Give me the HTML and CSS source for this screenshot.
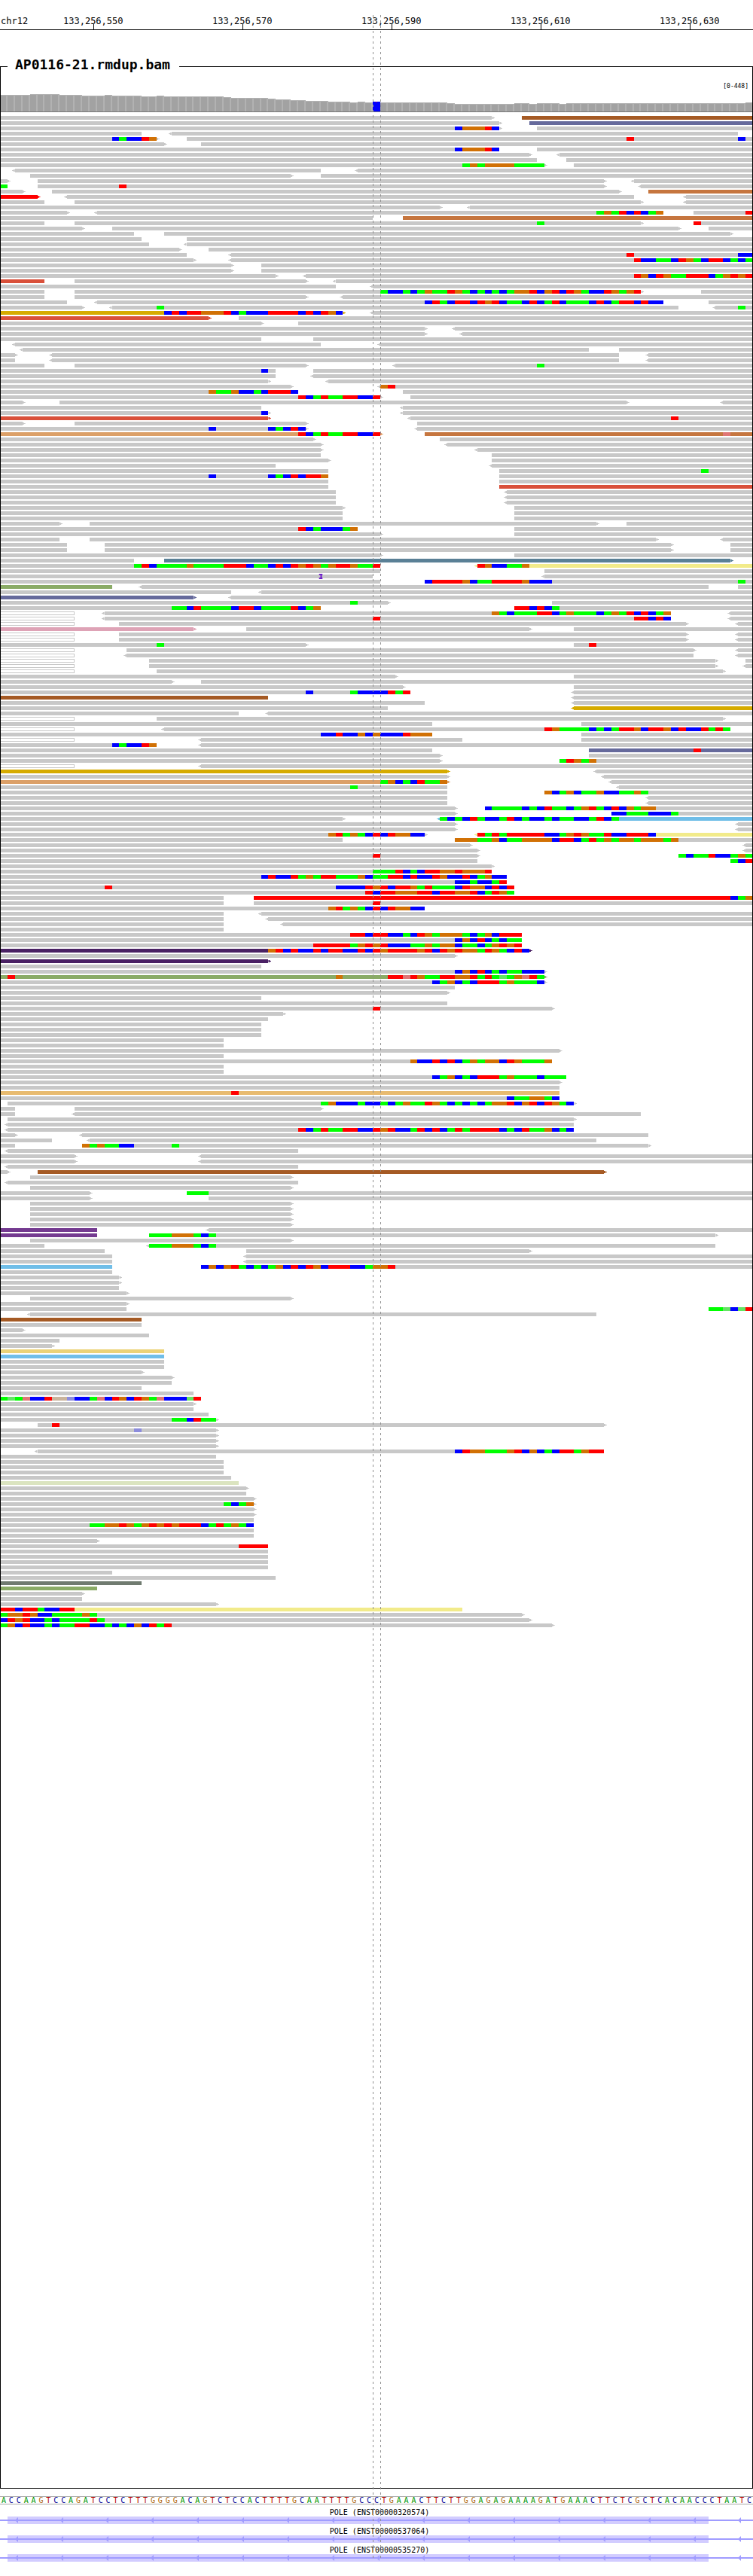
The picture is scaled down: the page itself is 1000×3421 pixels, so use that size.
FILE: index.html
```html
<!DOCTYPE html>
<html lang="en">
<head>
<meta charset="utf-8">
<title>chr12 – AP0116-21.rmdup.bam</title>
<link rel="stylesheet" href="styles.css">
</head>
<body>
<main class="browser">
  <header class="axis bases">
    <span class="chrom">chr12</span>
  </header>

  <fieldset class="track">
    <legend>AP0116-21.rmdup.bam</legend>
    <p class="range">[0-448]</p>
    <div class="plot">
      <div class="coverage bases"></div>
      <div class="pileup"></div>
    </div>
  </fieldset>

  <div class="sequence bases"></div>

  <section class="genes"></section>

  <div class="guide guide-start"></div>
  <div class="guide guide-end"></div>
</main>
<script src="data.js"></script>
<script src="browser.js"></script>
</body>
</html>
```
FILE: styles.css
```css
* { box-sizing: border-box; }

body {
  margin: 0;
  background: #fff;
  color: #000;
  font-family: "DejaVu Sans Mono", monospace;
}

.browser {
  position: relative;
  padding-bottom: 19px;
  overflow: hidden;
}

/* One column per reference base */
.bases {
  display: grid;
  grid-template-columns: repeat(101, minmax(0, 1fr));
}

/* Axis */
.axis {
  padding-top: 21px;
  border-bottom: 1px solid #000;
  font-size: 12px;
  line-height: 14px;
  white-space: nowrap;
}
.chrom { grid-area: 1 / 1 / 2 / 6; padding-left: 1px; }
.tick {
  position: relative;
  display: flex;
  justify-content: center;
  grid-row: 1;
  padding-bottom: 4px;
}
.tick::after {
  content: "";
  position: absolute;
  bottom: 0;
  left: 50%;
  width: 1px;
  height: 7px;
  background: #000;
}

/* Alignment track */
.track {
  min-width: 0;
  margin: 38px 0 0;
  padding: 0 0 1143px;
  border: 1px solid #000;
}
.track legend {
  margin-left: 9px;
  padding: 0 12px 4px 10px;
  font-size: 18px;
  font-weight: bold;
  line-height: 16px;
}
.range {
  margin: 0;
  padding: 12px 5px 0 0;
  font-size: 8px;
  line-height: 10px;
  text-align: right;
}
.plot { margin: 0 -1px; clip-path: inset(0 1px); }

.coverage {
  align-items: end;
  height: 29px;
  border-bottom: 1px solid #787878;
}
.bar {
  background: #a2a2a2;
  border-top: 1px solid #b2b2b2;
  border-right: 2px solid #b2b2b2;
}
.bar-variant { background: linear-gradient(#f00, #f00) center top / 1px 1px no-repeat #00f; }

.pileup {
  display: flex;
  flex-direction: column;
  gap: 2px;
  padding-top: 5px;
}
.row { height: 5px; }
.row > * { grid-row: 1; height: 5px; }

.read { position: relative; background: #c8c8c8; }
.forward::after,
.reverse::after {
  content: "";
  position: absolute;
  top: 0;
  width: 4px;
  height: 5px;
  background: inherit;
}
.forward::after {
  left: 100%;
  clip-path: polygon(0 1px, 2px 1px, 2px 2px, 4px 2px, 4px 3px, 2px 3px, 2px 4px, 0 4px);
}
.reverse::after {
  right: 100%;
  clip-path: polygon(4px 1px, 2px 1px, 2px 2px, 0 2px, 0 3px, 2px 3px, 2px 4px, 4px 4px);
}

.brown { background: #a55a24; }
.slate { background: #666a9c; }
.copper { background: #c6763f; }
.tomato { background: #d9503a; }
.red { background: #f00; }
.gold { background: #d6ab00; }
.sand { background: #dca068; }
.steel { background: #5a8096; }
.yellow { background: #f2eb8a; }
.olive { background: #8aab66; }
.pink { background: #dea3b6; }
.sky { background: #70bee8; }
.plum { background: #4a2164; }
.purple { background: #743a90; }
.tan { background: #e8bb70; }
.straw { background: #ebd277; }
.pale { background: #dbe4c0; }
.moss { background: #707b70; }
.ambiguous { background: #fff; border: 1px solid #c8c8c8; }

.mismatch { position: relative; }
.base-A { background: #0f0; }
.base-C { background: #00f; }
.base-G { background: #d17105; }
.base-T { background: #f00; }
.base-a { background: #64e464; }
.base-c { background: #8c8cdc; }
.base-g { background: #cab49c; }
.base-t { background: #e07676; }

.insertion {
  position: relative;
  justify-self: start;
  width: 5px;
  margin: -1px 0;
  transform: translateX(-50%);
  fill: #6e1ec8;
}
.row > .insertion { height: 7px; }

/* Reference sequence */
.sequence {
  margin-top: 10px;
  border: solid #aaa;
  border-width: 1px 0;
  font-size: 10px;
  line-height: 9px;
  text-align: center;
}
.nt-A { color: #009600; }
.nt-C { color: #000096; }
.nt-G { color: #b0680f; }
.nt-T { color: #b40000; }

/* Genes */
.genes {
  display: grid;
  gap: 5px;
  padding-top: 6px;
}
.gene-name {
  margin: 0;
  padding-left: 8px;
  font-size: 10px;
  line-height: 10px;
  text-align: center;
}
.exon {
  grid-area: 1 / 2 / 2 / 96;
  height: 10px;
  background: #d2ccff;
}
.strand {
  position: relative;
  grid-area: 1 / 1 / 2 / 102;
  display: block;
  width: 100%;
  height: 10px;
}

/* Centre-base guides */
.guide {
  position: absolute;
  top: 20px;
  bottom: 24px;
  width: 1px;
  background: repeating-linear-gradient(#919191 0 3px, transparent 3px 7px);
}
.guide-start { left: calc(100% * 50 / 101); }
.guide-end { left: calc(100% * 51 / 101); }
```
FILE: data.js
```js
const SEQUENCE =
  'ACCAAGTCCAGATCCTCTTTGGGGACAGTCTCCACTTTTGCAATTTTGCC' +
  'CTGAAACTTCTTGGAGAGAAAAGATGAAACTTCTCGCTCACAACCCTAATC';

const TICKS = [
  [12, '133,256,550'], [32, '133,256,570'], [52, '133,256,590'],
  [72, '133,256,610'], [92, '133,256,630'],
];

const GENES = ['POLE (ENST00000320574)', 'POLE (ENST00000537064)', 'POLE (ENST00000535270)'];

// [number of bases, bar height]
const COVERAGE = [
  [4, 22], [4, 23], [3, 22], [3, 21], [1, 22], [4, 21], [2, 20], [1, 21], [8, 20],
  [1, 19], [5, 18], [1, 17], [2, 16], [2, 15], [3, 14], [3, 13], [1, 12], [1, 13],
  [1, 12], [1, 13], [9, 12], [1, 11], [8, 10], [2, 11], [1, 10], [3, 11], [1, 10],
  [24, 11], [1, 12],
];

// One line per row: colour:<start-end>@offsetBASES; < and > mark the strand arrow
const READS = `
0-66> brown:70-101
0-67> slate:71-101
0-67>@61CGGGTC 72-101
0-19 <23-99
0-21>@15CACCTG 25-101@84T@99C
0-22> 27-101
0-67@61CGGGTC 72-101
0-71> <75-101
0-72 76-101
0-73>@62AGAGGGGAAAA 77-101
<2-43 <48-101
4-39> 43-101
0-1> 5-81> <85-101
0-1@0A 5-81>@16T <86-101
0-3> 7-83> copper:87-101
red:0-5> <9-85 <92-101
0-6 10-86> <92-101
0-59> <63-101
0-9> <13-89@80AGATCTCAG 93-101@100T
0-50 copper:54-101
0-6 10-86>@72A 93-101@93T
0-11> 15-91> 95-101
0-18 22-98>
0-19 25-101
0-20 <25-101
0-24> 28-101
0-25 <31-101@84T@99CC
0-26> <31-101@85TCCAACTGACTTCACA
0-31> 35-101
0-31> 35-101
0-37> <41-101@85TGCTGAATTTCAGTGT
tomato:0-6 10-41> <45-101
0-45 <50-101
0-6 10-86>@51ACCACAGAATGACACACAGGTCGTCTGACCTGAGT 94-101
0-6 10-41> <46-101
0-9 <13-89@57CTACTTCTGTCAACTCATCAAACTCATTCTCC 95-101
0-11> <15-91@21A <96-101@99A
gold:0-46>@22CTCTTGGGTCACCCTTTTCTCTGC <50-101
tomato:0-28> 32-101
0-35> 40-101
0-57> <61-101
0-57> <62-101
0-35 42-101
<2-43 <51-101
<3-79 83-101
0-2> <7-83 <87-101
0-2 <7-83 <87-101
0-6 10-41> <53-101@72A
0-37@35C 42-101
0-37 <42-101
0-36> <44-101
0-39> <51-101@51GT
0-40@28GAAGCCACTTTC 54-101
0-51>@40TCATAATTCCT 55-101
0-3> 8-84> <97-101
0-35 <54-101
0-36>@35C <54-101
tomato:0-36> <55-101@90T
0-3> 10-41> 56-101
0-41>@28C@36CACTC <56-101
sand:0-51>@40TCATAATTCCT copper:57-101@97t
0-42> 59-101
0-43> <60-101
0-43> <64-101
0-43 66-101
0-44> 66-101
0-37 <66-101
0-44 67-101@94A
0-44@28C@36CACTCTTG 67-101
0-44 67-101
0-44 tomato:67-101
0-45 <68-101
0-45 <68-101
0-45 <68-101
0-46> 69-101
0-46 69-101
0-46 69-101
0-8> 12-80> 84-101
0-48@40TCACCCAG 69-101
0-51> 69-101
0-8 12-88> <97-101
0-9 14-90> 98-101
0-9 14-90> 98-101
0-51> 69-101
0-18 steel:22-98>
0-51@18ATCAAAAGAAAATTTCAACTCTGTGAGTTGAAT yellow:<64-101@64TGCCAAG
0-51 73-101
0-50@43+ <73-101
0-51 57-101@57CTTTTGCAATTTTGCCC@99A
olive:0-15 <19-95 99-101
0-31 <35-101
slate:0-26> <31-101
0-52>@47A 74-101
0-43@23AACTAAAACTTCAAAATCAG 69-101@69TTCTCA
ambiguous:0-10 <14-90@66GACAAATTCAGAAACAGATCTCAG <98-101
ambiguous:0-10 <14-90@50T@85TTCTC <98-101
ambiguous:0-10 16-92> <99-101
pink:0-26> 33-71> 77-101
ambiguous:0-10 16-92> <99-101
ambiguous:0-10 16-92> <99-101
0-41>@21A 77-101@79T
ambiguous:0-10 17-93> <99-101
ambiguous:0-10 <17-93 <99-101
ambiguous:0-10 20-96> 100-101
ambiguous:0-10 20-96> <100-101
ambiguous:0-10 21-97>
0-53> 77-101
0-23> 27-101
0-54> 77-101
0-55@41C@47ACCCCTAT <77-101
brown:0-36 <77-101
0-57 <77-101
0-52 gold:<77-101
0-32 <36-101
ambiguous:0-10 21-97>
0-58 78-101
ambiguous:0-10 <22-98@73TGAAAACACATTGCTTGCTCCTATA
0-58@43CCTCCGCGCCCTGGG 78-101
ambiguous:0-10 <27-62 78-101
0-21@15CACCTG <27-101
0-58 slate:79-101@93T
0-59> 79-101
0-59> 75-101@75ATGAG
ambiguous:0-10 <27-101
gold:0-60> <80-101
0-60> <81-101
sand:0-60>@51AGCACTAAG <82-101
0-60@47A <83-101
0-60 73-101@73GCAGCAAGCCAAGA
0-60 <87-101
0-60 <87-101
0-61> 65-101@65CAAAACACTAACAGTACTCGAGG
0-61> 82-101@82CCAAACCCA
0-46> sky:<59-101@59ACACTACCATCACCACAACCATCA
0-61> <99-101
0-61> <99-101
0-57>@44GTAGACTCTGGCC yellow:<64-101@64TATATTTTTCCAGTGAATCCTTTC
0-46 61-101@61GGGAAGCAAGGGGCTTCATAGAGGAGGGAG
0-63> <100-101
0-64> <100-101
0-64>@50T 91-101@91ACAATCCAGA
0-64 98-101@98ACT
0-66>
0-66@50AAATCACTTGGTGGGT
0-68@35CTCCTAGATTAAAGCAATTCTCCTGCCTCAGCC
0-68@61CCACCAT
0-69@14T@45CCCCTGTCTTGATAAACTGGCTCT
0-69@49TCTTGGGTTCTTGGTCATGA
0-30 red:34-101@98CAG
0-30 34-101@50T
0-57@44GTAGACTCTGGCC
0-30 <35-101
0-30 <36-101
0-30 <38-101
0-30
0-70@47TTCTTCCACTGAGGGACAGCTTT
0-70@61CGCTCACAA
0-70@42TTTTTAGTGTCCCAAGAGGCAACAGTGT
plum:0-71>@36GTCTCCTCTTCCTCTGTTTTGTCTGTGGATGACTC
0-61>
plum:0-36>
0-35
0-73>@61CGCTCACAACCC
olive:0-73>@1T@45G@52TTtTGAATTGGTATAaAGtTA
0-73>@58CAGCACTTTAGAAAC
0-61
0-60>
0-35
0-60
0-74>@50T
0-38>
0-36
0-35
0-35
0-35
0-30
0-30
0-75>
0-30
0-74@55GCCTCTCAGAGGCTGAAAG
0-30
0-30
0-76@58CAGCACTTTAGAAACAAA
0-75>
0-75
tan:0-75@31T
0-75@68CAAGGAC
1-77>@43AGCCCACCACAGAATGACACACAGGTCGTCTGAC
0-2 10-43>
0-2 <10-86
1-77>
<1-77
<1-77@40TCATAATTCCTGTCCATCTCATATTTTCACTAAGCAC
0-2> <11-87
0-7 <12-80
0-2 11-87>@11GAGAACC@23A
<1-40
0-10> <27-101
0-10> <27-101
<1-40
0-1> brown:5-81>
4-39>
<1-40
4-39>
0-12> 25-101@25AAA
0-12> 28-101
4-39>
4-39>
4-39>
4-39>
4-39>
purple:0-13 <28-101
purple:0-13 20-96>@20AAAGGGACA
4-39>
0-6 <20-96@20AAAGGGACA
0-14 33-71>
0-15 <33-101
0-15 <33-101
sky:0-15 27-101@27CGCGTACACAGCTCTGCTTTCCAGGT
0-15
0-16>
0-16>
0-16
0-17>
4-39>
0-17>
0-17 95-101@95AAaCaT
<4-80
brown:0-19
0-19
0-3>
0-20
0-8
0-7>
straw:0-22
sky:0-22
0-22
0-22
0-19>
0-23>
0-23
0-19
0-26
0-27@0AaAtCCTggcCCAtCTGCTGAtCCCaT
0-26>
0-26
0-28
0-29>@23AACTAA
5-81>@7T
0-29>@18c
0-29>
0-29>
0-29>
<5-81@61CTGGAAAGTCGCACTTAGTT
0-29
0-30
0-30
0-30
0-31
pale:0-32
0-33>
0-33
0-34>
0-34>@30ACAG
0-34>
0-34>
0-34
0-34@12AAGGTGAGTGTGTTTCATAGAC
0-34
0-34
0-13>
0-36@32TTTT
0-36
0-36
0-36
0-36
0-15
0-37
moss:0-19
olive:0-13
0-11>
0-11
0-29>
yellow:0-62@0TTCTTACCTT
0-70>@0AGGTGCCAAAAGA
0-71>@0CTGTCCACAAAATA
0-74>@0AGCTCCACAATTCCACACGCTAT`;
```
FILE: browser.js
```js
const find = selector => document.querySelector(selector);

function add(parent, tag, className, text) {
  const node = document.createElement(tag);
  node.className = className;
  if (text) node.textContent = text;
  parent.append(node);
  return node;
}

// Place a node over the half-open range of bases [start, end)
function span(node, start, end) {
  node.style.gridColumn = `${start + 1} / ${end + 1}`;
}

for (const [base, label] of TICKS) {
  span(add(find('.axis'), 'span', 'tick', label), base - 4, base + 5);
}

for (const [count, height] of COVERAGE) {
  for (let i = 0; i < count; i++) {
    add(find('.coverage'), 'span', 'bar').style.height = `${height}px`;
  }
}
const variant = find('.coverage').children[50];
variant.className = 'bar-variant';
variant.style.height = '13px';

const INSERTION =
  '<svg class="insertion" viewBox="0 0 5 7"><path d="M0 0H5V2H4V5H5V7H0V5H2V2H0Z"/></svg>';

for (const line of READS.trim().split('\n')) {
  const row = add(find('.pileup'), 'div', 'row bases');
  for (const token of line.split(' ')) {
    const [, colour, left, start, end, right, marks] =
      token.match(/^(?:(\w+):)?(<?)(\d+)-(\d+)(>?)(.*)$/);
    const classes = ['read', colour, left && 'reverse', right && 'forward'];
    span(add(row, 'span', classes.filter(Boolean).join(' ')), +start, +end);

    for (const [, offset, bases] of marks.matchAll(/@(\d+)([A-Za-z+]+)/g)) {
      let at = +offset;
      if (bases === '+') {
        row.insertAdjacentHTML('beforeend', INSERTION);
        span(row.lastElementChild, at, at + 1);
        continue;
      }
      for (const [run, base] of bases.matchAll(/(.)\1*/g)) {
        span(add(row, 'span', `mismatch base-${base}`), at, at + run.length);
        at += run.length;
      }
    }
  }
}

for (const base of SEQUENCE) add(find('.sequence'), 'span', `nt-${base}`, base);

GENES.forEach((name, i) => {
  find('.genes').insertAdjacentHTML('beforeend', `
    <div class="gene">
      <p class="gene-name">${name}</p>
      <div class="bases">
        <span class="exon"></span>
        <svg class="strand">
          <pattern id="arrows-${i}" width="60" height="10" patternUnits="userSpaceOnUse">
            <path d="M20 5L24 1V9Z" fill="#a09cff"/>
          </pattern>
          <rect y="4" width="100%" height="2" fill="#a09cff"/>
          <rect width="100%" height="10" fill="url(#arrows-${i})"/>
        </svg>
      </div>
    </div>`);
});
```
